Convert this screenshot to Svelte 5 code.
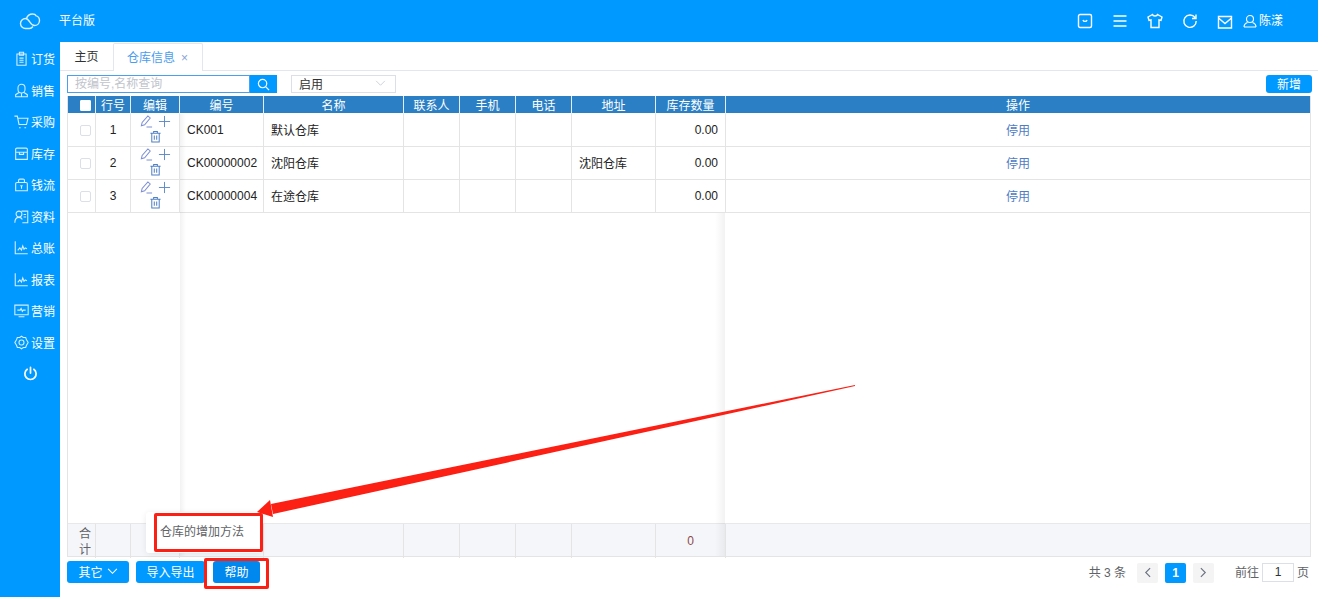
<script>
	const navItems = [
		{ label: '订货', d: 'M3.500 3.500h11V17h-11zM6.500 1.500h5v3.500h-5zM6.500 8.500h5M6.500 11h5M6.500 13.500h5' },
		{ label: '销售', d: 'M9 1.500a4.200 4.200 0 0 1 4.200 4.200v2a4.200 4.200 0 0 1-8.400 0v-2A4.200 4.200 0 0 1 9 1.500zM6 11.500L2 14v2.500h14V14l-4-2.500M9 12.500v4' },
		{ label: '采购', d: 'M.5 2.500h3.500l2 10h9l1.800-7.500H4.500M6 16.500h2M12.500 16.500h2' },
		{ label: '库存', d: 'M3.500 2.500h11a1.500 1.500 0 0 1 1.500 1.500v12H2V4a1.500 1.500 0 0 1 1.500-1.500zM2 7.500h14M6.500 7.500v2.500h5V7.500' },
		{ label: '钱流', d: 'M5.500 6.500V4a1.500 1.500 0 0 1 1.500-1.500h4A1.500 1.500 0 0 1 12.500 4v2.500M3.500 6.500h11A1.500 1.500 0 0 1 16 8v8.500H2V8a1.500 1.500 0 0 1 1.500-1.500zM9 10v4M7.500 10.500h3' },
		{ label: '资料', d: 'M9 2.500h7.500v14H10M11.500 6.500h3M11.500 9.500h3M6 2.500a3 3 0 0 1 0 7 3 3 0 0 1 0-7zM1 16.500c0-4 2-6.500 5-6.500 2 0 3.300 1 4 2.500' },
		{ label: '总账', d: 'M1.500 1.500v15h15M4.500 12.500l2.500-3 2 2.500 1.500-5 1.500 4 1.500-1.500 2 1' },
		{ label: '报表', d: 'M1.500 1.500v15h15M4.500 12.500l2.500-3 2 2.500 1.500-5 1.500 4 1.500-1.500 2 1' },
		{ label: '营销', d: 'M1 2.500h16v11.500H1zM5.500 16.500h7M4 8.500h3.500l1-2 1.500 3.500 1-1.500h3' },
		{ label: '设置', d: 'M9 1.500l2.200 1.500h2.800l1 2.600L17 9l-2 3.400-1 2.600h-2.800L9 16.500 6.800 15H4l-1-2.600L1 9l2-3.400L4 3h2.800zM9 6a3 3 0 1 1 0 6 3 3 0 0 1 0-6z' }
	];

	const topIcons = [
		'M3 1.500h10A1.500 1.500 0 0 1 14.500 3v10a1.500 1.500 0 0 1-1.500 1.500H3A1.500 1.500 0 0 1 1.500 13V3A1.500 1.500 0 0 1 3 1.500zM6 7c.5 1.800 3.500 1.800 4 0',
		'M1.500 3h13M1.500 8h13M1.500 13h13',
		'M5.500 1.500L1 4l1 3.500 2-.5v7.500h8V7l2 .5L15 4l-4.500-2.500C10 3.500 6 3.500 5.500 1.500z',
		'M13 4.500A6.200 6.200 0 1 0 14.200 8M14 1.500v4h-4',
		'M1.500 3.500h13v11.500h-13zM1.500 5L8 10.500 14.500 5'
	];

	const columns = ['行号', '编辑', '编号', '名称', '联系人', '手机', '电话', '地址', '库存数量', '操作'];

	const rows = [
		{ no: 1, code: 'CK001', name: '默认仓库', addr: '', qty: '0.00' },
		{ no: 2, code: 'CK00000002', name: '沈阳仓库', addr: '沈阳仓库', qty: '0.00' },
		{ no: 3, code: 'CK00000004', name: '在途仓库', addr: '', qty: '0.00' }
	];
</script>

<div class="app">
	<header class="topbar">
		<svg class="logo" viewBox="0 0 22 17" width="22" height="17" fill="none" stroke="#d8efff" stroke-width="1.400">
			<path d="M6.500 5.500a5 5 0 0 0 0 10h4c1.500 0 2.500-.8 3.500-2M6.500 5.500c2 0 3 1.500 4 3s2.500 4 5 4a5 5 0 0 0 1-9.900M7.500 5.500C8.500 2.500 11 1 13.500 1c1.500 0 3 .5 3.500 1.600" />
		</svg>
		<span class="brand">平台版</span>
		<div class="top-tools">
			{#each topIcons as d}
				<svg viewBox="0 0 16 16" width="16" height="16" fill="none" stroke="#fff" stroke-width="1.400"><path {d} /></svg>
			{/each}
			<div class="user">
				<svg viewBox="0 0 14 14" width="14" height="14" fill="none" stroke="#fff" stroke-width="1.100"><circle cx="7" cy="5" r="3.500" /><path d="M1 13c0-2.500 2-4 3.500-4.500M13 13c0-2.500-2-4-3.500-4.500M1 13h12" /></svg>
				<span>陈漾</span>
			</div>
		</div>
	</header>

	<div class="body">
		<nav class="sidebar">
			{#each navItems as item}
				<div class="nav-item">
					<svg viewBox="0 0 18 18" width="15" height="15" fill="none" stroke="#d5edff" stroke-width="1.300"><path d={item.d} /></svg>
					<span>{item.label}</span>
				</div>
			{/each}
			<div class="nav-power">
				<svg viewBox="0 0 16 16" width="15" height="15" fill="none" stroke="#fff" stroke-width="1.800" stroke-linecap="round"><path d="M8 1.500v6M4.500 3.500a6 6 0 1 0 7 0" /></svg>
			</div>
		</nav>

		<main class="main">
			<div class="tabs">
				<div class="tab">主页</div>
				<div class="tab active">仓库信息<span class="close">×</span></div>
			</div>

			<div class="content">
				<div class="toolbar">
					<div class="search">
						<div class="search-input">按编号,名称查询</div>
						<div class="search-btn">
							<svg viewBox="0 0 14 14" width="13" height="13" fill="none" stroke="#fff" stroke-width="1.300"><circle cx="6" cy="6" r="4.500" /><path d="M9.500 9.500L13 13" /></svg>
						</div>
					</div>
					<div class="select">
						<span>启用</span>
						<svg viewBox="0 0 12 8" width="11" height="7" fill="none" stroke="#c8ccd4" stroke-width="1"><path d="M1 1l5 5 5-5" /></svg>
					</div>
					<button class="btn add">新增</button>
				</div>

				<div class="table">
					<div class="row head">
						<div class="cell check-cell"><span class="check head-check"></span></div>
						{#each columns as col}
							<div class="cell">{col}</div>
						{/each}
					</div>

					{#each rows as row}
						<div class="row data">
							<div class="cell check-cell"><span class="check"></span></div>
							<div class="cell">{row.no}</div>
							<div class="cell edit">
								<svg viewBox="0 0 14 14" width="13" height="13" fill="none" stroke="#7d8fd4" stroke-width="1.100"><path d="M1.500 11.500l.8-3.500L8.500 1l2.500 2.200L5 10.500zM7 13h6" /></svg>
								<svg viewBox="0 0 14 14" width="13" height="13" fill="none" stroke="#5a86c8" stroke-width="1"><path d="M7 1v12M1 7h12" /></svg>
								<svg viewBox="0 0 14 14" width="13" height="13" fill="none" stroke="#4f80c4" stroke-width="1.100"><path d="M1.500 3.500h11M5 3.500V1.500h4v2M3 3.500V13h8V3.500M5.700 6v4.500M8.300 6v4.500" /></svg>
							</div>
							<div class="cell left">{row.code}</div>
							<div class="cell left cjk">{row.name}</div>
							<div class="cell"></div>
							<div class="cell"></div>
							<div class="cell"></div>
							<div class="cell left cjk">{row.addr}</div>
							<div class="cell right">{row.qty}</div>
							<div class="cell link cjk">停用</div>
						</div>
					{/each}

					<div class="spacer"></div>

					<div class="row foot">
						<div class="cell total">合计</div>
						<div class="cell"></div>
						<div class="cell"></div>
						<div class="cell"></div>
						<div class="cell"></div>
						<div class="cell"></div>
						<div class="cell"></div>
						<div class="cell"></div>
						<div class="cell"></div>
						<div class="cell sum">0</div>
						<div class="cell"></div>
					</div>

					<div class="shade shade-left"></div>
					<div class="shade shade-right"></div>
				</div>

				<div class="footer">
					<button class="btn other">其它
						<svg viewBox="0 0 12 8" width="11" height="7" fill="none" stroke="#fff" stroke-width="1.200"><path d="M1 1l5 5 5-5" /></svg>
					</button>
					<button class="btn">导入导出</button>
					<button class="btn help">帮助</button>

					<div class="pager">
						<span class="total-text">共 3 条</span>
						<span class="page-btn">
							<svg viewBox="0 0 8 12" width="7" height="11" fill="none" stroke="#6b7280" stroke-width="1.300"><path d="M7 1L2 6l5 5" /></svg>
						</span>
						<span class="page-btn current">1</span>
						<span class="page-btn">
							<svg viewBox="0 0 8 12" width="7" height="11" fill="none" stroke="#6b7280" stroke-width="1.300"><path d="M1 1l5 5-5 5" /></svg>
						</span>
						<span class="goto">前往</span>
						<span class="page-input">1</span>
						<span class="page-unit">页</span>
					</div>
				</div>
			</div>
		</main>
	</div>

	<div class="popover">仓库的增加方法</div>

	<div class="mark mark-tip"></div>
	<div class="mark mark-help"></div>
	<svg class="arrow" width="1318" height="597" viewBox="0 0 1318 597">
		<polygon fill="#fb1f14" points="855,385 271,504 273,514 855,386" />
		<polygon fill="#fb1f14" points="257,512 270,500 273,517" />
	</svg>
</div>

<style>
	:global(body) {
		margin: 0;
	}

	.app {
		position: relative;
		height: 597px;
		overflow: hidden;
		display: flex;
		flex-direction: column;
		font-family: 'Liberation Sans', 'Noto Sans CJK SC', sans-serif;
		font-size: 12px;
		color: #333;
		background: #fff;
	}

	.topbar {
		height: 42px;
		flex: none;
		display: flex;
		align-items: center;
		background: #0099ff;
		color: #fff;
	}

	.logo {
		margin-left: 19px;
		margin-top: 1px;
	}

	.brand {
		margin-left: 18px;
		margin-top: -3px;
	}

	.top-tools {
		margin-left: auto;
		display: flex;
		align-items: center;
		gap: 19px;
		margin-right: 35px;
	}

	.user {
		display: flex;
		align-items: center;
		gap: 2px;
		margin-left: -9px;
		font-size: 12px;
	}

	.user span {
		margin-top: -3px;
	}

	.body {
		flex: 1;
		display: flex;
		min-height: 0;
	}

	.sidebar {
		width: 60px;
		flex: none;
		padding-top: 1px;
		background: #0099ff;
		color: #fff;
	}

	.nav-item {
		height: 31.5px;
		display: flex;
		align-items: center;
		gap: 2px;
		padding-left: 14px;
	}

	.nav-power {
		height: 31.5px;
		display: flex;
		align-items: center;
		justify-content: center;
	}

	.main {
		flex: 1;
		min-width: 0;
		display: flex;
		flex-direction: column;
	}

	.tabs {
		height: 29px;
		flex: none;
		box-sizing: border-box;
		display: flex;
		border-bottom: 1px solid #e4e6ee;
	}

	.tab {
		width: 53px;
		height: 28px;
		box-sizing: border-box;
		padding-top: 5px;
		text-align: center;
		color: #303133;
	}

	.tab.active {
		width: 90px;
		padding-left: 13px;
		padding-top: 4px;
		text-align: left;
		color: #4a9cf0;
		background: #fff;
		border: 1px solid #e4e6ee;
		border-bottom: none;
		border-radius: 2px 2px 0 0;
		margin-top: 1px;
	}

	.close {
		margin-left: 6px;
		color: #8aa4d8;
		font-size: 12px;
	}

	.content {
		flex: 1;
		min-height: 0;
		display: flex;
		flex-direction: column;
		padding: 0 7px;
	}

	.toolbar {
		height: 25px;
		flex: none;
		box-sizing: border-box;
		padding-top: 4px;
		display: flex;
	}

	.search {
		display: flex;
		height: 18px;
	}

	.search-input {
		width: 183px;
		box-sizing: border-box;
		border: 1px solid #4a9ff0;
		padding-left: 7px;
		line-height: 17px;
		color: #c0c4cc;
	}

	.search-btn {
		width: 27px;
		background: #0099ff;
		display: flex;
		align-items: center;
		justify-content: center;
	}

	.select {
		margin-left: 14px;
		width: 105px;
		height: 18px;
		box-sizing: border-box;
		border: 1px solid #dcdfe6;
		padding: 0 9px 2px 7px;
		display: flex;
		align-items: center;
		justify-content: space-between;
		color: #333;
	}

	.btn {
		height: 22px;
		box-sizing: border-box;
		border: none;
		border-radius: 3px;
		padding: 0 0 2px;
		background: #0099ff;
		color: #fff;
		font: inherit;
	}

	.add {
		margin-left: auto;
		margin-right: -1px;
		width: 46px;
		height: 18px;
		padding-bottom: 3px;
	}

	.table {
		position: relative;
		flex: 1;
		min-height: 0;
		display: flex;
		flex-direction: column;
		border-left: 1px solid #e4e4e4;
		border-right: 1px solid #e4e4e4;
		border-bottom: 1px solid #e4e4e4;
	}

	.row {
		flex: none;
		display: grid;
		grid-template-columns: 28px 35px 49px 84px 140px 56px 56px 56px 84px 70px 1fr;
	}

	.cell {
		box-sizing: border-box;
		display: flex;
		align-items: center;
		justify-content: center;
		border-right: 1px solid #e4e4e4;
		min-width: 0;
	}

	.cell:last-child {
		border-right: none;
	}

	.check-cell {
		padding-left: 7px;
	}

	.head {
		height: 18px;
		box-sizing: border-box;
		border-bottom: 1px solid #fff;
		background: #2b80c5;
		color: #fff;
	}

	.head .cell {
		border-right-color: #e4eef7;
		padding-bottom: 2px;
	}

	.head .check-cell {
		padding-bottom: 0;
	}

	.data {
		height: 33px;
		border-bottom: 1px solid #e4e4e4;
		box-sizing: border-box;
		color: #222;
	}

	.left {
		justify-content: flex-start;
		padding-left: 7px;
	}

	.right {
		justify-content: flex-end;
		padding-right: 7px;
	}

	.cjk {
		padding-bottom: 2px;
	}

	.link {
		color: #4f7cc4;
	}

	.edit {
		flex-wrap: wrap;
		align-content: center;
		column-gap: 5px;
		row-gap: 2px;
		padding: 0 0 2px;
	}

	.check {
		width: 9px;
		height: 9px;
		border: 1px solid #dcdfe6;
		border-radius: 2px;
		background: #fff;
	}

	.head-check {
		border-color: #fff;
		border-radius: 1px;
	}

	.spacer {
		flex: 1;
	}

	.foot {
		height: 33px;
		background: #f5f6fa;
		color: #606266;
		border-top: 1px solid #e8e8e8;
		box-sizing: border-box;
	}

	.total {
		padding: 2px 4px 0 11px;
		line-height: 16px;
		justify-content: flex-start;
	}

	.sum {
		color: #8a4a4a;
	}

	.shade {
		position: absolute;
		top: 18px;
		bottom: 0;
		width: 6px;
		pointer-events: none;
		background: linear-gradient(to right, rgba(0, 0, 0, 0.05), rgba(0, 0, 0, 0));
	}

	.shade-left {
		left: 112px;
	}

	.shade-right {
		left: 647px;
		top: 117px;
		width: 10px;
		transform: scaleX(-1);
	}

	.footer {
		height: 40px;
		flex: none;
		display: flex;
		align-items: flex-start;
		padding-top: 4px;
		box-sizing: border-box;
		gap: 7px;
	}

	.footer .btn {
		width: 62px;
	}

	.footer .other {
		display: flex;
		align-items: center;
		justify-content: center;
		gap: 4px;
	}

	.footer .btn:nth-child(2) {
		width: 69px;
	}

	.footer .help {
		width: 47px;
		margin-left: 1px;
		background: #0088ee;
	}

	.pager {
		margin-left: auto;
		margin-right: 2px;
		display: flex;
		align-items: center;
		height: 21px;
		color: #606266;
		margin-top: 1px;
	}

	.total-text {
		margin-right: 11px;
		margin-top: -3px;
	}

	.page-btn {
		width: 21px;
		height: 20px;
		margin-right: 7px;
		display: flex;
		align-items: center;
		justify-content: center;
		background: #f4f4f5;
		border-radius: 2px;
	}

	.page-btn.current {
		background: #0099ff;
		color: #fff;
		font-weight: 700;
	}

	.goto {
		margin-left: 14px;
		margin-top: -3px;
	}

	.page-input {
		width: 32px;
		height: 19px;
		box-sizing: border-box;
		margin: 0 3px;
		border: 1px solid #dcdfe6;
		text-align: center;
		line-height: 17px;
		color: #303133;
	}

	.page-unit {
		margin-top: -3px;
	}

	.popover {
		position: absolute;
		left: 146px;
		top: 512px;
		width: 116px;
		height: 41px;
		box-sizing: border-box;
		padding: 10px 0 0 14px;
		background: #fff;
		border-radius: 3px;
		color: #606266;
		box-shadow: 0 1px 6px rgba(0, 0, 0, 0.08);
	}

	.mark {
		position: absolute;
		box-sizing: border-box;
		border: 3px solid #fb1f14;
		border-radius: 2px;
	}

	.mark-tip {
		left: 154px;
		top: 513px;
		width: 109px;
		height: 39px;
	}

	.mark-help {
		left: 204px;
		top: 558px;
		width: 65px;
		height: 31px;
	}

	.arrow {
		position: absolute;
		left: 0;
		top: 0;
		pointer-events: none;
	}
</style>
